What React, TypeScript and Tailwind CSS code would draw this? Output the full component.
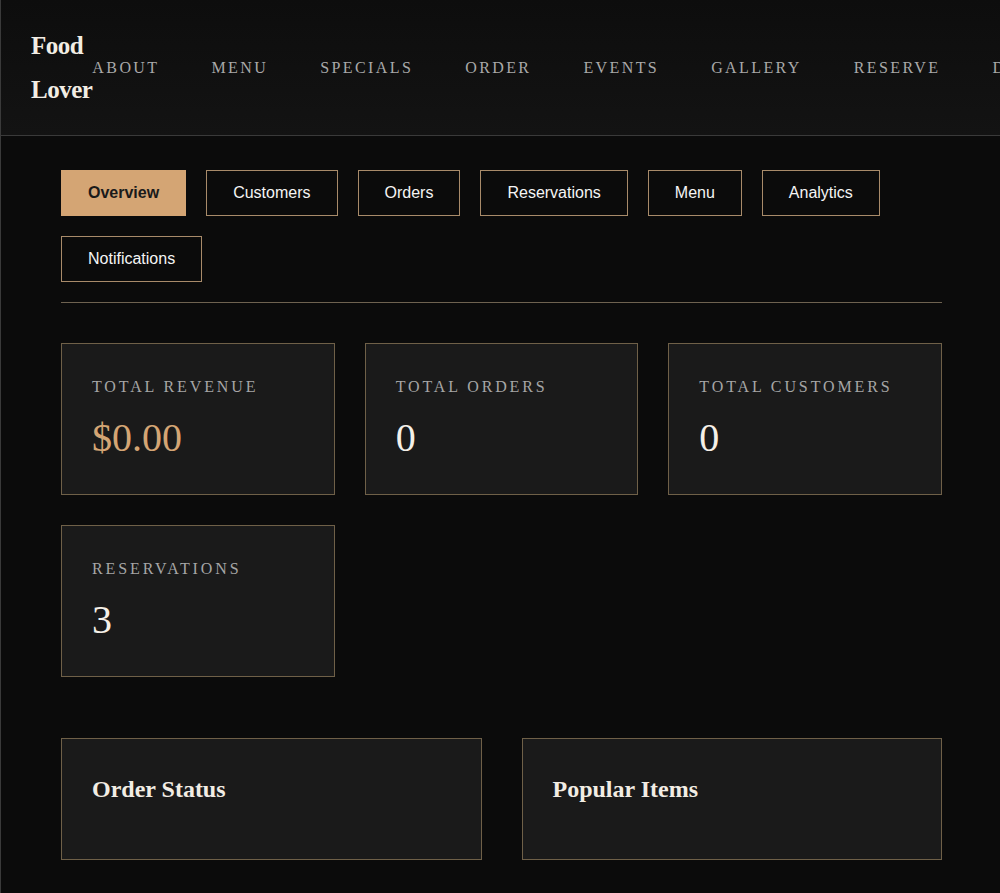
const serif = "font-['Liberation_Serif','Times_New_Roman',serif]"
const sans = "font-['Liberation_Sans',Arial,sans-serif]"

const navLinks = ["About", "Menu", "Specials", "Order", "Events", "Gallery", "Reserve", "Dashboard"]
const tabs = ["Overview", "Customers", "Orders", "Reservations", "Menu", "Analytics", "Notifications"]

const stats = [
  { label: "Total Revenue", value: "$0.00", accent: true },
  { label: "Total Orders", value: "0" },
  { label: "Total Customers", value: "0" },
  { label: "Reservations", value: "3" },
]

function StatCard({ label, value, accent }: { label: string; value: string; accent?: boolean }) {
  return (
    <div className="border border-[#6f6048] bg-[#1a1a1a] px-[30px] pt-[31px] pb-[30px]">
      <p className={`${serif} text-base leading-6 uppercase tracking-[0.18em] text-[#a6a6a6]`}>{label}</p>
      <p className={`${serif} mt-[13px] text-[40px] leading-[52px] ${accent ? "text-[#d4a574]" : "text-[#f5f0e8]"}`}>
        {value}
      </p>
    </div>
  )
}

export default function App() {
  return (
    <div className="min-h-screen border-l border-[#3a3a3a] bg-[#0b0b0b]">
      <header className="flex h-[136px] items-center overflow-hidden border-b border-[#3a3a3a] bg-gradient-to-b from-[#0d0d0d] to-[#131313] pl-[30px]">
        <div className={`${serif} w-min shrink text-[25px] font-bold leading-[44px] tracking-[-0.02em] text-[#f2ede4]`}>
          Food Lover
        </div>
        <nav className="flex shrink-0 gap-[52px] whitespace-nowrap">
          {navLinks.map((l) => (
            <a key={l} className={`${serif} text-base uppercase tracking-[0.15em] text-[#a9a9a9]`}>
              {l}
            </a>
          ))}
        </nav>
      </header>

      <main className="pl-[60px] pr-[58px] pt-[34px] pb-10">
        <div className="flex flex-wrap gap-5 border-b border-[#6e6250] pb-5">
          {tabs.map((t, i) => (
            <button
              key={t}
              type="button"
              className={`${sans} border px-[26px] py-2.5 text-base leading-6 ${
                i === 0
                  ? "border-[#d4a574] bg-[#d4a574] font-semibold text-[#1a1a1a]"
                  : "border-[#a88b6a] bg-transparent text-[#f5f5f5]"
              }`}
            >
              {t}
            </button>
          ))}
        </div>

        <div className="mt-10 grid grid-cols-3 gap-[30px]">
          {stats.map((s) => (
            <StatCard key={s.label} {...s} />
          ))}
        </div>

        <div className="mt-[61px] grid grid-cols-2 gap-10">
          {["Order Status", "Popular Items"].map((t) => (
            <div key={t} className="border border-[#6f6048] bg-[#1a1a1a] p-[30px]">
              <h3 className={`${serif} mb-5 text-2xl font-bold leading-10 text-[#f2ede4]`}>{t}</h3>
            </div>
          ))}
        </div>
      </main>
    </div>
  )
}
